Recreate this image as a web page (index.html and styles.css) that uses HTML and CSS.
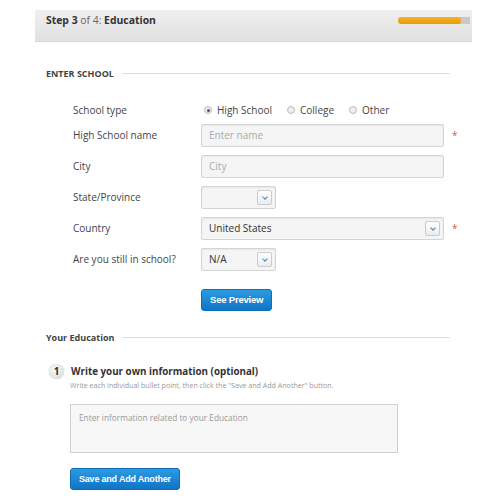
FILE: index.html
```html
<!DOCTYPE html>
<html lang="en">
<head>
  <meta charset="UTF-8">
  <meta name="viewport" content="width=device-width, initial-scale=1.0">
  <title>Step 3 of 4: Education</title>
  <link rel="stylesheet" href="styles.css">
</head>
<body>
  <div class="step-bar">
    <h2 class="step-title"><b>Step 3</b> of 4: <b>Education</b></h2>
    <div class="step-progress"><span class="step-progress-fill" style="width: 88%"></span></div>
  </div>

  <div class="section-title"><span>ENTER SCHOOL</span></div>
  <form class="school-form" onsubmit="return false">
    <div class="form-row">
      <label>School type</label>
      <div class="radio-group">
        <label class="radio"><span class="radio-dot checked"></span>High School</label>
        <label class="radio"><span class="radio-dot"></span>College</label>
        <label class="radio"><span class="radio-dot"></span>Other</label>
      </div>
    </div>
    <div class="form-row">
      <label for="school-name">High School name</label>
      <input type="text" id="school-name" class="field wide" placeholder="Enter name">
      <span class="required">*</span>
    </div>
    <div class="form-row">
      <label for="city">City</label>
      <input type="text" id="city" class="field wide" placeholder="City">
    </div>
    <div class="form-row">
      <label>State/Province</label>
      <div class="select short"><span class="select-value"></span><span class="select-arrow"></span></div>
    </div>
    <div class="form-row">
      <label>Country</label>
      <div class="select wide"><span class="select-value">United States</span><span class="select-arrow"></span></div>
      <span class="required">*</span>
    </div>
    <div class="form-row">
      <label>Are you still in school?</label>
      <div class="select short"><span class="select-value">N/A</span><span class="select-arrow"></span></div>
    </div>
    <div class="form-actions">
      <button class="btn-blue">See Preview</button>
    </div>
  </form>

  <div class="section-title education"><span>Your Education</span></div>
  <div class="write-step">
    <div class="write-head">
      <span class="step-num">1</span>
      <h3>Write your own information (optional)</h3>
    </div>
    <p class="write-hint">Write each individual bullet point, then click the "Save and Add Another" button.</p>
    <textarea class="info-box" placeholder="Enter information related to your Education"></textarea>
    <button class="btn-blue">Save and Add Another</button>
  </div>
</body>
</html>
```
FILE: styles.css
```css
* {
  box-sizing: border-box;
}
body {
  margin: 0;
  padding: 10px 28px 0 35px;
  font-family: "Open Sans", "DejaVu Sans", sans-serif;
  color: #333;
  background: #fff;
}
.step-bar {
  display: flex;
  justify-content: space-between;
  align-items: flex-start;
  height: 32px;
  padding: 3px 2px 0 11px;
  background: linear-gradient(#efefef, #e1e1e1);
  border-bottom: 1px solid #d6d6d6;
}
.step-title {
  margin: 0;
  font-size: 10.4px;
  font-weight: normal;
  color: #666;
}
.step-title b {
  color: #333;
}
.step-progress {
  width: 72px;
  height: 7px;
  margin-top: 4px;
  background: #c9c9c9;
  border-radius: 3px 0 0 3px;
  overflow: hidden;
}
.step-progress-fill {
  display: block;
  height: 100%;
  background: linear-gradient(#f6b321, #e89a0b);
  border-radius: 3px;
}
.section-title {
  display: flex;
  align-items: center;
  gap: 8px;
  margin: 25px 22px 0 11px;
  font-size: 9px;
  font-weight: bold;
  color: #444;
}
.section-title::after {
  content: "";
  flex: 1;
  border-top: 1px solid #ddd;
}
.section-title.education {
  margin-top: 20px;
}
.school-form {
  padding: 23px 0 0 38px;
}
.form-row {
  display: flex;
  align-items: center;
  min-height: 23px;
  margin-bottom: 8px;
  font-size: 10px;
}
.form-row:first-child {
  min-height: 12px;
  margin-bottom: 6.5px;
}
.form-row > label {
  width: 128px;
  color: #444;
}
.radio-group {
  display: flex;
  gap: 15px;
  margin-left: 3px;
}
.radio {
  display: flex;
  align-items: center;
  gap: 5px;
  color: #444;
}
.radio-dot {
  width: 8px;
  height: 8px;
  border: 1px solid #bbb;
  border-radius: 50%;
  background: #eee;
  position: relative;
}
.radio-dot.checked::after {
  content: "";
  position: absolute;
  left: 1.5px;
  top: 1.5px;
  width: 3px;
  height: 3px;
  border-radius: 50%;
  background: #555;
}
.field, .select {
  height: 23px;
  border: 1px solid #d4d4d4;
  border-radius: 2px;
  background: #f5f5f5;
  box-shadow: inset 0 1px 2px rgba(0, 0, 0, 0.06);
  font-family: inherit;
  font-size: 10px;
  color: #333;
}
.field {
  padding: 0 7px;
}
.field::placeholder {
  color: #aaa;
}
.wide {
  width: 243px;
}
.short {
  width: 75px;
}
.select {
  display: flex;
  align-items: center;
  justify-content: space-between;
  padding: 0 3px 0 7px;
}
.select-arrow {
  width: 15px;
  height: 15px;
  border: 1px solid #ccc;
  border-radius: 2px;
  background: linear-gradient(#fff, #ececec);
  position: relative;
}
.select-arrow::after {
  content: "";
  position: absolute;
  left: 5px;
  top: 4px;
  width: 3px;
  height: 3px;
  border-right: 1.2px solid #3a86b8;
  border-bottom: 1.2px solid #3a86b8;
  transform: rotate(45deg);
}
.required {
  margin-left: 8px;
  color: #e05a4a;
  font-size: 10px;
}
.form-actions {
  padding: 10px 0 0 128px;
}
.btn-blue {
  display: block;
  height: 22px;
  padding: 0 8px;
  border: 1px solid #0d6fb5;
  border-radius: 3px;
  background: linear-gradient(#2c9be3, #0f74c4);
  color: #fff;
  font-family: "Liberation Sans", Arial, sans-serif;
  font-size: 9.5px;
  font-weight: bold;
  letter-spacing: -0.2px;
}
.write-step {
  padding: 20px 0 0 14px;
}
.write-head {
  display: flex;
  align-items: center;
  gap: 7px;
}
.step-num {
  display: flex;
  align-items: center;
  justify-content: center;
  width: 15px;
  height: 15px;
  border-radius: 50%;
  background: radial-gradient(circle at 40% 35%, #fafafa, #d4d4d4);
  box-shadow: 0 0 1px rgba(0, 0, 0, 0.4);
  font-size: 10px;
  font-weight: bold;
  color: #333;
}
.write-head h3 {
  margin: 0;
  font-size: 9.8px;
  color: #333;
}
.write-hint {
  margin: 1px 0 0 21px;
  font-size: 7.1px;
  color: #999;
}
.info-box {
  display: block;
  width: 328px;
  height: 49px;
  margin: 14px 0 15px 21px;
  padding: 7px 8px;
  border: 1px solid #d0d0d0;
  background: #f7f7f7;
  resize: none;
  font-family: inherit;
  font-size: 8.3px;
}
.info-box::placeholder {
  color: #999;
}
.write-step .btn-blue {
  margin-left: 21px;
  font-size: 9px;
}
```
